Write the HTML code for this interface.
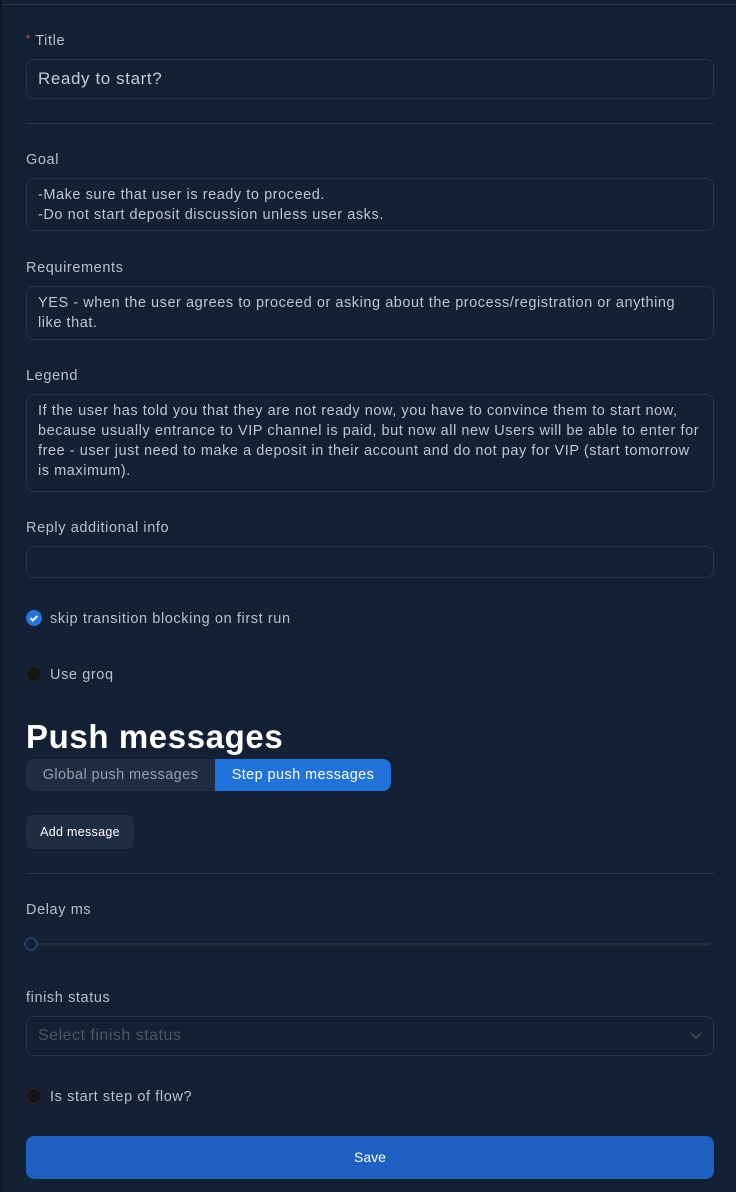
<!DOCTYPE html>
<html><head><style>
*{box-sizing:border-box;margin:0;padding:0}
body{width:736px;height:1192px;background:#142033;font-family:"Liberation Sans",sans-serif;color:#c5ccd6;position:relative;overflow:hidden}
.abs{position:absolute}
.lbl{position:absolute;left:26px;font-size:14.5px;color:#b8c0cc;letter-spacing:.6px}
.box{position:absolute;left:26px;width:688px;border:1px solid #28354a;border-radius:8px;background:#142033;font-size:14.5px;line-height:20px;color:#bfc6d1;padding:6px 11px;letter-spacing:.55px}
.hr{position:absolute;left:26px;width:688px;height:1px;background:#2b384c}
</style></head><body>
<div class="abs" style="left:0;top:0;width:2px;height:1192px;background:#0e1726"></div>
<div class="abs" style="left:2px;top:4px;width:734px;height:1px;background:#2b384c"></div>
<div class="lbl" style="top:33px"><span style="color:#e5484d;font-size:11px;vertical-align:top">*</span> Title</div>
<div class="box" style="top:59px;height:40px;font-size:17px;padding:9px 11px;color:#c5ccd6;letter-spacing:.6px">Ready to start?</div>
<div class="hr" style="top:123px"></div>
<div class="lbl" style="top:152px">Goal</div>
<div class="box" style="top:178px;height:53px">-Make sure that user is ready to proceed.<br>-Do not start deposit discussion unless user asks.</div>
<div class="lbl" style="top:260px">Requirements</div>
<div class="box" style="top:286px;height:54px">YES - when the user agrees to proceed or asking about the process/registration or anything like that.</div>
<div class="lbl" style="top:368px">Legend</div>
<div class="box" style="top:394px;height:98px">If the user has told you that they are not ready now, you have to convince them to start now, because usually entrance to VIP channel is paid, but now all new Users will be able to enter for free - user just need to make a deposit in their account and do not pay for VIP (start tomorrow is maximum).</div>
<div class="lbl" style="top:520px">Reply additional info</div>
<div class="box" style="top:546px;height:32px"></div>
<div class="abs" style="left:26px;top:610px;width:16px;height:16px;border-radius:50%;background:#2474e0"><svg width="16" height="16"><path d="M4.5 8.2l2.3 2.3 4.5-4.6" stroke="#fff" stroke-width="2" fill="none"/></svg></div>
<div class="lbl" style="left:50px;top:611px">skip transition blocking on first run</div>
<div class="abs" style="left:26px;top:666px;width:16px;height:16px;border-radius:50%;background:#151515;border:1px solid #2a2a2a"></div>
<div class="lbl" style="left:50px;top:667px">Use groq</div>
<div class="abs" style="left:26px;top:718px;font-size:33px;font-weight:bold;color:#fff;letter-spacing:.6px">Push messages</div>
<div class="abs" style="left:26px;top:759px;width:189px;height:32px;background:#1f2d42;border-radius:8px 0 0 8px;font-size:14.5px;color:#97a1ae;text-align:center;line-height:32px;letter-spacing:.4px">Global push messages</div>
<div class="abs" style="left:215px;top:759px;width:176px;height:32px;background:#2272dc;border-radius:0 8px 8px 0;font-size:14.5px;color:#fff;text-align:center;line-height:32px;letter-spacing:.4px">Step push messages</div>
<div class="abs" style="left:26px;top:815px;width:108px;height:34px;background:#1f2d42;border-radius:6px;font-size:12.5px;color:#fff;text-align:center;line-height:34px;letter-spacing:.3px">Add message</div>
<div class="hr" style="top:873px"></div>
<div class="lbl" style="top:902px">Delay ms</div>
<div class="abs" style="left:30px;top:943px;width:680px;height:3px;background:#222e40;border-radius:2px"></div>
<div class="abs" style="left:24px;top:937px;width:14px;height:14px;border-radius:50%;border:2px solid #24406e;background:#142033"></div>
<div class="lbl" style="top:990px">finish status</div>
<div class="box" style="top:1016px;height:40px;font-size:16px;padding:9px 11px;color:#4d5868;letter-spacing:.5px">Select finish status</div>
<svg class="abs" style="left:690px;top:1030px" width="12" height="10"><path d="M1 3l5 5 5-5" stroke="#4d5868" fill="none"/></svg>
<div class="abs" style="left:26px;top:1088px;width:16px;height:16px;border-radius:50%;background:#151515;border:1px solid #2a2a2a"></div>
<div class="lbl" style="left:50px;top:1089px">Is start step of flow?</div>
<div class="abs" style="left:26px;top:1136px;width:688px;height:43px;background:#1f5fc2;border-radius:8px;font-size:14px;color:#fff;text-align:center;line-height:43px">Save</div>
</body></html>
